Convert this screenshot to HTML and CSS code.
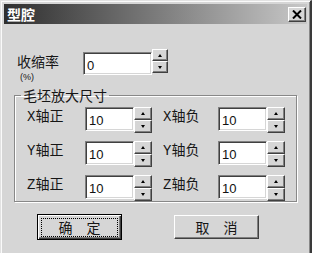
FILE: index.html
```html
<!DOCTYPE html>
<html lang="zh-CN">
<head>
    <meta charset="UTF-8">
    <meta name="viewport" content="width=device-width, initial-scale=1.0">
    <title>型腔</title>
    <link rel="stylesheet" href="styles.css">
</head>
<body>

    <div class="window">
        <div class="titlebar">
            <span class="title">型腔</span>
            <button class="close">
                <svg width="10" height="9" viewBox="0 0 10 9">
                    <path d="M1 0.5 L9 8.5 M9 0.5 L1 8.5" stroke="#000" stroke-width="2"/>
                </svg>
            </button>
        </div>

        <div class="content">
            <!-- shrink rate -->
            <div class="rate-row">
                <label class="rate-label">收缩率<small>(%)</small></label>
                <div class="spin-field rate">
                    <input type="text" value="0">
                    <div class="spin">
                        <button class="up"></button>
                        <button class="down"></button>
                    </div>
                </div>
            </div>

            <!-- blank enlarge size -->
            <fieldset class="group">
                <legend>毛坯放大尺寸</legend>

                <div class="row">
                    <div class="field">
                        <label>X轴正</label>
                        <div class="spin-field">
                            <input type="text" value="10">
                            <div class="spin"><button class="up"></button><button class="down"></button></div>
                        </div>
                    </div>
                    <div class="field right">
                        <label>X轴负</label>
                        <div class="spin-field">
                            <input type="text" value="10">
                            <div class="spin"><button class="up"></button><button class="down"></button></div>
                        </div>
                    </div>
                </div>

                <div class="row">
                    <div class="field">
                        <label>Y轴正</label>
                        <div class="spin-field">
                            <input type="text" value="10">
                            <div class="spin"><button class="up"></button><button class="down"></button></div>
                        </div>
                    </div>
                    <div class="field right">
                        <label>Y轴负</label>
                        <div class="spin-field">
                            <input type="text" value="10">
                            <div class="spin"><button class="up"></button><button class="down"></button></div>
                        </div>
                    </div>
                </div>

                <div class="row">
                    <div class="field">
                        <label>Z轴正</label>
                        <div class="spin-field">
                            <input type="text" value="10">
                            <div class="spin"><button class="up"></button><button class="down"></button></div>
                        </div>
                    </div>
                    <div class="field right">
                        <label>Z轴负</label>
                        <div class="spin-field">
                            <input type="text" value="10">
                            <div class="spin"><button class="up"></button><button class="down"></button></div>
                        </div>
                    </div>
                </div>
            </fieldset>

            <div class="actions">
                <button class="btn default"><span class="focus"><span>确</span><span>定</span></span></button>
                <button class="btn cancel"><span>取</span><span>消</span></button>
            </div>
        </div>
    </div>

</body>
</html>
```

FILE: styles.css
```css
* {
    box-sizing: border-box;
}
body {
    margin: 0;
    background-color: #d6d6d6;
    font-family: "Liberation Mono", "Noto Sans CJK SC", monospace;
    font-size: 14px;
    color: #161616;
}
.window {
    width: 312px;
    height: 253px;
    padding: 3px 3px 0 3px;
    border-top: 1px solid #e2e2e2;
    border-left: 1px solid #e2e2e2;
    border-right: 2px solid #3a3a3a;
    background-color: #d6d6d6;
    box-shadow: inset 1px 1px #fafafa, inset -1px 0 #888;
}
.titlebar {
    height: 20px;
    display: flex;
    align-items: center;
    justify-content: space-between;
    padding: 0 1px 0 3px;
    background: linear-gradient(to right, #2e2e2e, #c8c8c8);
}
.title {
    color: white;
    font-family: "Noto Sans CJK SC", sans-serif;
    font-weight: bold;
    line-height: 14px;
}
.close {
    width: 18px;
    height: 15px;
    padding: 0;
    display: flex;
    align-items: center;
    justify-content: center;
    background-color: #d6d6d6;
    border: 1px solid;
    border-color: #fff #404040 #404040 #fff;
    box-shadow: inset -1px -1px #808080;
}
.content {
    padding-top: 25px;
}
.rate-row {
    display: flex;
    height: 30px;
    padding-left: 13px;
}
.rate-label {
    width: 66px;
    display: flex;
    flex-direction: column;
    padding-top: 5px;
    font-family: "Noto Sans CJK SC", sans-serif;
    line-height: 14px;
}
.rate-label small {
    margin-top: 5px;
    font-family: "Liberation Sans", sans-serif;
    font-size: 9px;
    line-height: 9px;
    padding-left: 3px;
}
.spin-field {
    display: flex;
    align-items: flex-start;
}
input {
    width: 49px;
    height: 24px;
    padding: 3px 0 0 3px;
    font-family: "Liberation Sans", sans-serif;
    font-size: 13px;
    color: #111;
    background-color: white;
    border: 1px solid;
    border-color: #808080 #fff #fff #808080;
    box-shadow: inset 1px 1px #404040, inset -1px -1px #d6d6d6;
    outline: none;
}
.spin {
    width: 18px;
    height: 26px;
    display: flex;
    flex-direction: column;
}
.spin button {
    flex: 1;
    padding: 0;
    display: flex;
    align-items: center;
    justify-content: center;
    background-color: #d6d6d6;
    border: 1px solid;
    border-color: #fff #404040 #404040 #fff;
    box-shadow: inset -1px -1px #808080;
}
.spin button::after {
    content: "";
    width: 0;
    height: 0;
    border-left: 2.5px solid transparent;
    border-right: 2.5px solid transparent;
}
.spin .up::after {
    border-bottom: 3px solid #000;
}
.spin .down::after {
    border-top: 3px solid #000;
}
.rate input {
    width: 69px;
    height: 23px;
    margin-top: 3px;
}
.rate .spin {
    width: 16px;
    height: 24px;
}
/* group box */
.group {
    width: 283px;
    margin: 9px 0 0 10px;
    padding: 5px 0 0 12px;
    border: 1px solid #888;
    box-shadow: inset 1px 1px #fff, 1px 1px #fff;
}
.group legend {
    margin-left: -6px;
    padding: 0 2px;
    font-family: "Noto Sans CJK SC", sans-serif;
    line-height: 14px;
}
.row {
    display: flex;
    margin-bottom: 8px;
}
.row:last-child {
    margin-bottom: 0;
}
.field {
    display: flex;
}
.field label {
    width: 58px;
    align-self: center;
    padding-bottom: 6px;
    line-height: 14px;
}
.field.right {
    margin-left: 11px;
}
.field.right label {
    width: 55px;
}
/* buttons */
.actions {
    display: flex;
    align-items: flex-start;
    margin-top: 12px;
    padding-left: 33px;
}
.btn {
    width: 85px;
    height: 24px;
    padding: 0;
    display: flex;
    align-items: center;
    justify-content: center;
    gap: 14px;
    font-family: "Noto Sans CJK SC", sans-serif;
    font-size: 14px;
    color: #161616;
    background-color: #d6d6d6;
    border: 1px solid;
    border-color: #fff #404040 #404040 #fff;
    box-shadow: inset -1px -1px #808080;
}
.btn.default {
    height: 26px;
    border: 1px solid #000;
    box-shadow: inset 1px 1px #fff, inset -1px -1px #404040, inset -2px -2px #808080;
}
.btn .focus {
    width: 77px;
    height: 19px;
    display: flex;
    align-items: center;
    justify-content: center;
    gap: 14px;
    border: 1px dotted #000;
}
.btn.cancel {
    margin: 1px 0 0 52px;
}
```
